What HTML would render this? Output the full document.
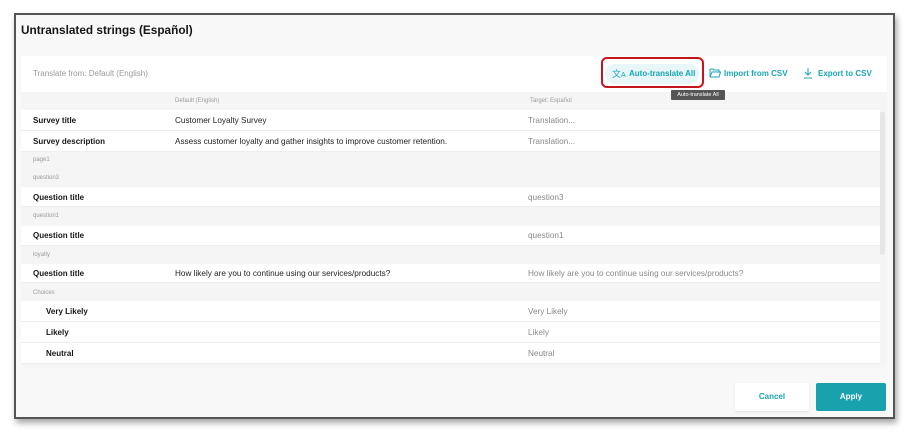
<!DOCTYPE html>
<html><head><style>
*{margin:0;padding:0;box-sizing:border-box}
body{width:906px;height:440px;background:#fff;font-family:"Liberation Sans",sans-serif;position:relative;overflow:hidden}
.dlg{position:absolute;left:14px;top:13px;width:881px;height:406px;background:#f8f8f8;border:2px solid #555;box-shadow:2px 4px 6px rgba(0,0,0,.35)}
.a{position:absolute;white-space:nowrap}
.row{position:absolute;left:21px;width:859px;background:#fff;border-bottom:1px solid #eee}
.g{background:#f5f5f5;border-bottom:none}
.lb{font-size:8px;font-weight:bold;color:#161616}
.tx{font-size:8.2px;color:#222}
.tg{font-size:8.2px;color:#888}
.sm{font-size:6px;color:#999}
.tl{color:#19a6b3;font-size:8px;font-weight:bold}
</style></head><body>
<div class="dlg"></div>
<div class="a" style="left:21px;top:23px;font-size:11.8px;font-weight:bold;color:#161616">Untranslated strings (Español)</div>
<div class="a" style="left:21px;top:56px;width:866px;height:311px;background:#f5f5f5"></div>
<div class="a" style="left:21px;top:56px;width:866px;height:36px;background:#fff"></div>
<div class="a" style="left:33px;top:69px;font-size:8px;color:#999">Translate from: Default (English)</div>
<div class="a" style="left:605px;top:64px;width:94px;height:20px;border-radius:10px;background:#e8f6f7"></div>
<div class="a" style="left:601px;top:57px;width:103px;height:31px;border:2px solid #c4161c;border-radius:6px"></div>
<div class="a tl" style="left:612px;top:67px;font-weight:normal;font-size:9px">文<span style="font-size:7px">A</span></div>
<div class="a tl" style="left:629px;top:69px">Auto-translate All</div>
<svg class="a" style="left:709px;top:68px" width="12" height="10" viewBox="0 0 12 10"><path d="M1 1h3l1 1h5v2M1 1v8h9l1.5-5H3L1 9" fill="none" stroke="#19a6b3" stroke-width="1"/></svg>
<div class="a tl" style="left:724px;top:69px">Import from CSV</div>
<svg class="a" style="left:803px;top:67px" width="10" height="12" viewBox="0 0 10 12"><path d="M5 1v7M2 5l3 3 3-3M1 11h8" fill="none" stroke="#19a6b3" stroke-width="1"/></svg>
<div class="a tl" style="left:818px;top:69px">Export to CSV</div>
<div class="a" style="left:671px;top:90px;width:54px;height:10px;background:#555;color:#fff;font-size:5.5px;line-height:10px;text-align:center;border-radius:1px">Auto-translate All</div>
<div class="a sm" style="left:175px;top:98px">Default (English)</div>
<div class="a sm" style="left:530px;top:98px">Target: Español</div>
<div class="row" style="top:110px;height:21px"></div>
<div class="row" style="top:131px;height:21px"></div>
<div class="row g" style="top:152px;height:16px"></div>
<div class="row g" style="top:168px;height:19px"></div>
<div class="row" style="top:187px;height:20px"></div>
<div class="row g" style="top:207px;height:19px"></div>
<div class="row" style="top:226px;height:20px"></div>
<div class="row g" style="top:246px;height:18px"></div>
<div class="row" style="top:264px;height:19px"></div>
<div class="row g" style="top:283px;height:18px"></div>
<div class="row" style="top:301px;height:21px"></div>
<div class="row" style="top:322px;height:21px"></div>
<div class="row" style="top:343px;height:21px"></div>
<div class="a" style="left:880px;top:112px;width:5px;height:143px;background:#e6e6e6;border-radius:2px"></div>
<div class="a lb" style="left:33px;top:116px">Survey title</div>
<div class="a tx" style="left:175px;top:116px">Customer Loyalty Survey</div>
<div class="a tg" style="left:528px;top:116px">Translation...</div>
<div class="a lb" style="left:33px;top:137px">Survey description</div>
<div class="a tx" style="left:175px;top:137px">Assess customer loyalty and gather insights to improve customer retention.</div>
<div class="a tg" style="left:528px;top:137px">Translation...</div>
<div class="a sm" style="left:33px;top:157px">page1</div>
<div class="a sm" style="left:33px;top:175px">question3</div>
<div class="a lb" style="left:33px;top:193px">Question title</div>
<div class="a tg" style="left:528px;top:193px">question3</div>
<div class="a sm" style="left:33px;top:213px">question1</div>
<div class="a lb" style="left:33px;top:231px">Question title</div>
<div class="a tg" style="left:528px;top:231px">question1</div>
<div class="a sm" style="left:33px;top:252px">loyalty</div>
<div class="a lb" style="left:33px;top:269px">Question title</div>
<div class="a tx" style="left:175px;top:269px">How likely are you to continue using our services/products?</div>
<div class="a tg" style="left:528px;top:269px">How likely are you to continue using our services/products?</div>
<div class="a sm" style="left:33px;top:290px">Choices</div>
<div class="a lb" style="left:46px;top:307px">Very Likely</div>
<div class="a tg" style="left:528px;top:307px">Very Likely</div>
<div class="a lb" style="left:46px;top:328px">Likely</div>
<div class="a tg" style="left:528px;top:328px">Likely</div>
<div class="a lb" style="left:46px;top:349px">Neutral</div>
<div class="a tg" style="left:528px;top:349px">Neutral</div>
<div class="a" style="left:735px;top:383px;width:74px;height:28px;background:#fff;border-radius:2px;box-shadow:0 1px 2px rgba(0,0,0,.1);color:#19a6b3;font-size:8px;font-weight:bold;text-align:center;line-height:28px">Cancel</div>
<div class="a" style="left:816px;top:383px;width:70px;height:28px;background:#19a1ae;border-radius:2px;color:#fff;font-size:8px;font-weight:bold;text-align:center;line-height:28px">Apply</div>
</body></html>
